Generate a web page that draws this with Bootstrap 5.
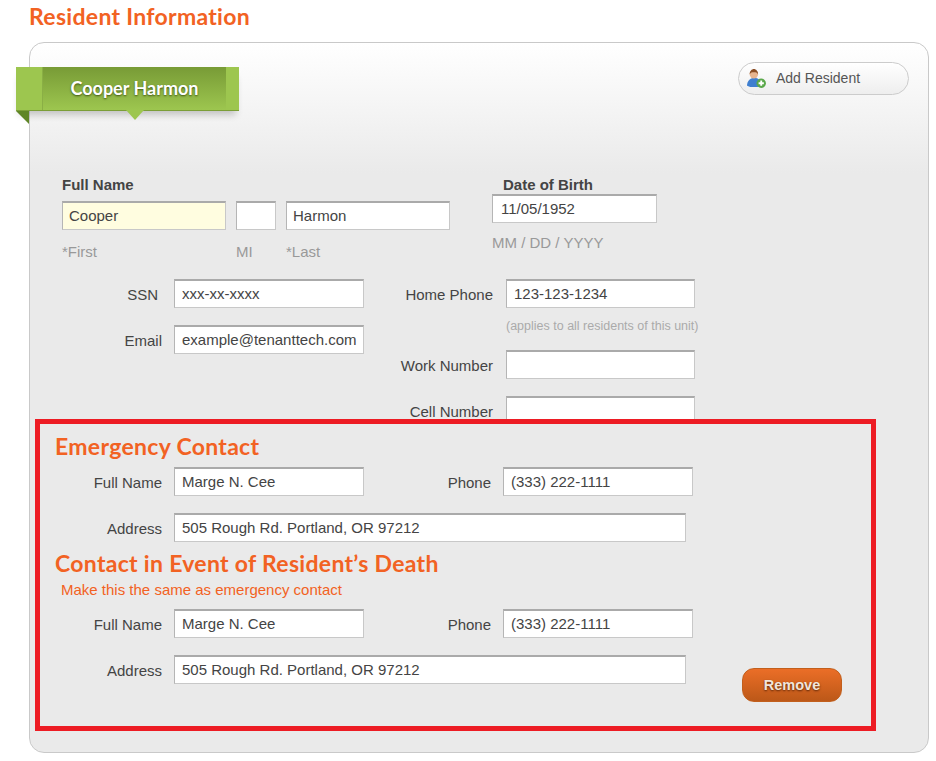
<!DOCTYPE html>
<html lang="en">
<head>
<meta charset="utf-8">
<title>Resident Information</title>
<link href="https://cdn.jsdelivr.net/npm/bootstrap@5.3.0/dist/css/bootstrap.min.css" rel="stylesheet">
<style>
body{background:#fff;font-family:"Liberation Sans",Arial,sans-serif;font-size:15px;color:#444;width:936px;height:761px;overflow:hidden}
.page-title,.sect-title{font-family:"Lato","Noto Sans",sans-serif;font-weight:700;color:#f26223;margin:0;letter-spacing:.3px}
.page-title{font-size:23px;line-height:28px;padding:2px 0 0 29px;height:42px}
.sheet{margin-left:29px;width:900px;height:711px;border:1px solid #c9c9c9;border-radius:15px;background:linear-gradient(#fff 0,#eaeaea 130px,#eaeaea 100%)}
.ribbon-row{padding-top:24px;height:68px;position:relative}
.ribbon{margin-left:-14px;width:223px;height:44px;display:flex;border-bottom:1px solid #7b9e38;position:relative;box-shadow:0 7px 7px -3px rgba(0,0,0,.2)}
.ribbon::before{content:"";position:absolute;left:0;top:44px;border-top:13px solid #5f8526;border-left:13px solid transparent}
.ribbon::after{content:"";position:absolute;left:110px;top:43px;border-top:10px solid #9dc64f;border-left:9px solid transparent;border-right:9px solid transparent}
.ribbon-side{background:#9dc64f;flex:none}
.ribbon-l{width:27px;border-right:1px solid #8aaf45}
.ribbon-r{width:13px}
.ribbon-mid{flex:1;background:linear-gradient(#789b36,#9dc64f);font-family:"Lato","Noto Sans",sans-serif;font-weight:700;font-size:18px;color:#fff;text-align:center;line-height:42px;text-shadow:0 1px 2px rgba(40,60,0,.8)}
.add-btn,.add-btn:hover{position:absolute;right:19px;top:19px;width:171px;height:33px;border:1px solid #ccc;border-radius:17px;background:linear-gradient(#fff,#eee);color:#555;font-size:14px;padding:0 0 0 7px;text-align:left;display:flex;align-items:center;gap:9px}
.add-btn svg{flex:none}
.field,.field:focus{height:29px;flex:none;border:1px solid #c8c8c8;border-top:2px solid #aaa;border-left-color:#b5b5b5;border-radius:0;padding:0 0 2px 7px;font-size:15px;color:#444;background:#fff;box-shadow:none}
.f-first,.f-first:focus{background:#fffde0;width:164px;padding-left:6px}
.f-mi{width:40px}
.f-last,.f-last:focus{width:164px;padding-left:6px}
.f-190{width:190px}.f-189{width:189px}
.f-dob,.f-dob:focus{width:165px;padding-left:8px}
.f-addr{width:512px}
.top-zone{padding-top:65px;height:168px}
.bold-label{font-weight:700;font-size:15px;line-height:17px;color:#444}
.hint{color:#999;font-size:15px;line-height:17px}
.name-block{margin-left:32px;width:388px}
.name-lab{margin-bottom:8px}
.name-hints{margin-top:13px}
.hint-a{width:174px}.hint-b{width:50px}
.dob-block{margin-left:42px;width:165px}
.dob-label{margin:0 0 1px 11px}
.dob-hint{margin-top:11px}
.lab{text-align:right;flex:none;height:29px;line-height:31px}
.lab-a{width:132px}.lab-b{width:113px}
.ssn-lab{padding-right:4px}
.col-right{margin-left:16px}
.ms-field{margin-left:12px}
.ms-field2{margin-left:13px}
.note{font-size:12.500px;color:#aaa;line-height:15px;margin-left:126px;height:42px;padding-top:11px;white-space:nowrap}
.gap-row{margin-top:17px}
.alert-box{position:relative;margin:-6px 0 0 5px;width:841px;height:312px;border:5px solid #ed1c24;background:#eaeaea;padding:8px 0 0 15px}
.sect-title{font-size:23px;line-height:28px}
.sect-two{margin-top:7px}
.mt-cr{margin-top:7px}
.alert-box .lab-a{margin-left:-15px;width:122px}
.phone-lab{width:100px;margin-left:27px}
.same{color:#f26223;font-size:15px;line-height:17px;margin:4px 0 11px 6px}
.rm-btn,.rm-btn:hover{margin:13px 0 0 56px;flex:none;width:100px;height:34px;border-radius:12px;border:1px solid #c25f1c;background:linear-gradient(#eb6e27,#bc5818);color:#f1e5da;font-weight:700;font-size:14.500px;padding:1px 0 0;text-shadow:0 1px 2px rgba(60,20,0,.8)}
</style>
</head>
<body>
<h1 class="page-title">Resident Information</h1>
<div class="sheet">
  <div class="ribbon-row">
    <div class="ribbon">
      <div class="ribbon-side ribbon-l"></div>
      <div class="ribbon-mid">Cooper Harmon</div>
      <div class="ribbon-side ribbon-r"></div>
    </div>
    <button class="btn add-btn" type="button">
      <svg width="21" height="21" viewBox="0 0 20 20"><path d="M1 17c0-4 2-6 4-7l3-1 3 1c2 1 3 3 3 7l-3 1H4z" fill="#3f7fd0"/><circle cx="7.500" cy="6" r="4" fill="#e7b48f"/><path d="M3.500 6c0-3 2-5 4-5s4 2 4 5c-1-2-2-2-4-2s-3 0-4 2z" fill="#8a4d24"/><circle cx="14.500" cy="14.500" r="4.500" fill="#5aa84a"/><path d="M14.500 12v5M12 14.500h5" stroke="#fff" stroke-width="1.800"/></svg>
      <span>Add Resident</span>
    </button>
  </div>

  <div class="d-flex top-zone">
    <div class="name-block">
      <div class="bold-label name-lab">Full Name</div>
      <div class="d-flex justify-content-between">
        <input class="form-control field f-first" value="Cooper">
        <input class="form-control field f-mi" value="">
        <input class="form-control field f-last" value="Harmon">
      </div>
      <div class="d-flex hint name-hints">
        <span class="hint-a">*First</span><span class="hint-b">MI</span><span>*Last</span>
      </div>
    </div>
    <div class="dob-block">
      <div class="bold-label dob-label">Date of Birth</div>
      <input class="form-control field f-dob" value="11/05/1952">
      <div class="hint dob-hint">MM / DD / YYYY</div>
    </div>
  </div>

  <div class="d-flex">
    <div>
      <div class="d-flex">
        <div class="lab lab-a ssn-lab">SSN</div>
        <input class="form-control field f-190 ms-field" value="xxx-xx-xxxx">
      </div>
      <div class="d-flex gap-row">
        <div class="lab lab-a">Email</div>
        <input class="form-control field f-190 ms-field" value="example@tenanttech.com">
      </div>
    </div>
    <div class="col-right">
      <div class="d-flex">
        <div class="lab lab-b">Home Phone</div>
        <input class="form-control field f-189 ms-field2" value="123-123-1234">
      </div>
      <div class="note">(applies to all residents of this unit)</div>
      <div class="d-flex">
        <div class="lab lab-b">Work Number</div>
        <input class="form-control field f-189 ms-field2" value="">
      </div>
      <div class="d-flex gap-row">
        <div class="lab lab-b">Cell Number</div>
        <input class="form-control field f-189 ms-field2" value="">
      </div>
    </div>
  </div>

  <section class="alert-box">
    <h2 class="sect-title">Emergency Contact</h2>
    <div class="d-flex mt-cr">
      <div class="lab lab-a">Full Name</div>
      <input class="form-control field f-190 ms-field" value="Marge N. Cee">
      <div class="lab phone-lab">Phone</div>
      <input class="form-control field f-190 ms-field" value="(333) 222-1111">
    </div>
    <div class="d-flex gap-row">
      <div class="lab lab-a">Address</div>
      <input class="form-control field f-addr ms-field" value="505 Rough Rd. Portland, OR 97212">
    </div>
    <h2 class="sect-title sect-two">Contact in Event of Resident’s Death</h2>
    <div class="same">Make this the same as emergency contact</div>
    <div class="d-flex">
      <div class="lab lab-a">Full Name</div>
      <input class="form-control field f-190 ms-field" value="Marge N. Cee">
      <div class="lab phone-lab">Phone</div>
      <input class="form-control field f-190 ms-field" value="(333) 222-1111">
    </div>
    <div class="d-flex gap-row align-items-start">
      <div class="lab lab-a">Address</div>
      <input class="form-control field f-addr ms-field" value="505 Rough Rd. Portland, OR 97212">
      <button class="btn rm-btn" type="button">Remove</button>
    </div>
  </section>
</div>
</body>
</html>
